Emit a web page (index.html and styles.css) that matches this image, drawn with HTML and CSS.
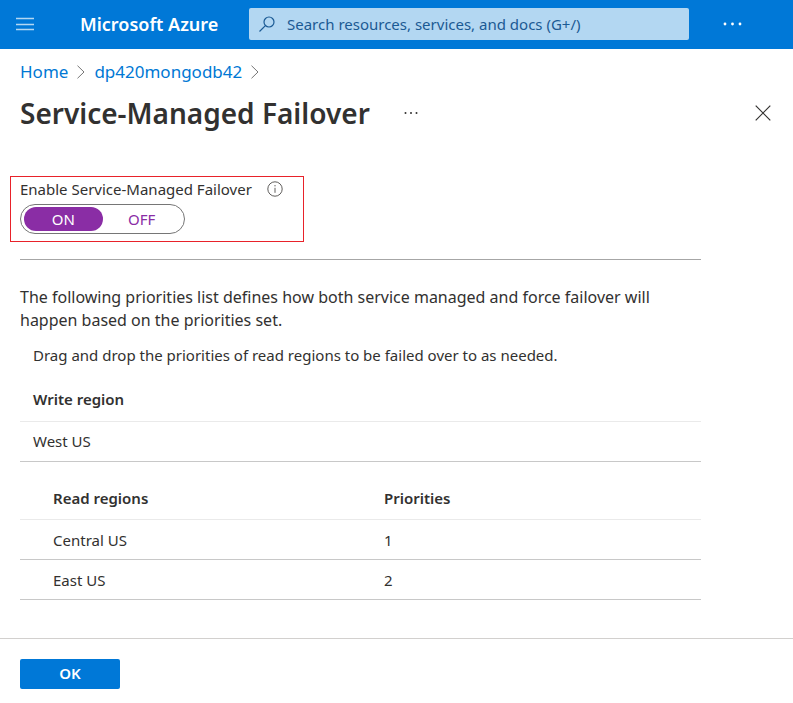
FILE: index.html
```html
<!DOCTYPE html>
<html lang="en">
<head>
<meta charset="utf-8">
<meta name="viewport" content="width=device-width, initial-scale=1">
<title>Service-Managed Failover - Microsoft Azure</title>
<link rel="stylesheet" href="styles.css">
</head>
<body>
<header class="topbar">
  <button class="icon-button menu-button" type="button" aria-label="Show portal menu">
    <svg width="18" height="14" viewBox="0 0 18 14" stroke="#b3d7f2" fill="none" stroke-width="1.300"><path d="M0 1.500h18M0 7.500h18M0 12.500h18"/></svg>
  </button>
  <a class="brand" href="#">Microsoft Azure</a>
  <label class="search">
    <svg width="16" height="16" viewBox="0 0 16 16" stroke="#1b5a94" fill="none" stroke-width="1.2"><circle cx="10" cy="6" r="5"/><path d="M6.4 9.6.5 15.5"/></svg>
    <input type="search" aria-label="Search" placeholder="Search resources, services, and docs (G+/)">
  </label>
  <button class="icon-button more-button" type="button" aria-label="More">
    <svg width="20" height="4" viewBox="0 0 20 4" fill="#fff"><circle cx="2" cy="2" r="1.4"/><circle cx="9.500" cy="2" r="1.4"/><circle cx="17" cy="2" r="1.4"/></svg>
  </button>
</header>

<nav class="breadcrumb" aria-label="Breadcrumb">
  <a href="#">Home</a>
  <svg width="8" height="14" viewBox="0 0 8 14" stroke="#767676" fill="none"><path d="M.5.7 7 7 .5 13.300"/></svg>
  <a href="#">dp420mongodb42</a>
  <svg width="8" height="14" viewBox="0 0 8 14" stroke="#767676" fill="none"><path d="M.5.7 7 7 .5 13.300"/></svg>
</nav>

<div class="title-row">
  <h1>Service-Managed Failover</h1>
  <button class="icon-button" type="button" aria-label="More actions">
    <svg width="14" height="4" viewBox="0 0 14 4" fill="#323130"><circle cx="1.500" cy="2" r="1"/><circle cx="7" cy="2" r="1"/><circle cx="12.500" cy="2" r="1"/></svg>
  </button>
  <button class="icon-button close-button" type="button" aria-label="Close">
    <svg width="16" height="16" viewBox="0 0 16 16" stroke="#323130" fill="none" stroke-width="1.200"><path d="m.7.7 14.600 14.600M15.300.7.7 15.300"/></svg>
  </button>
</div>

<main>
  <fieldset class="failover">
    <legend class="failover-label">
      Enable Service-Managed Failover
      <svg width="16" height="16" viewBox="0 0 16 16" fill="none" stroke="#605e5c"><circle cx="8" cy="8" r="7.200"/><path d="M8 6.800v5M8 4v1.400"/></svg>
    </legend>
    <div class="toggle">
      <label><input type="radio" name="failover" checked><span>ON</span></label>
      <label><input type="radio" name="failover"><span>OFF</span></label>
    </div>
  </fieldset>

  <div class="content">
    <p class="intro">The following priorities list defines how both service managed and force failover will happen based on the priorities set.</p>
    <p class="hint">Drag and drop the priorities of read regions to be failed over to as needed.</p>

    <table class="regions write">
      <thead><tr><th scope="col">Write region</th></tr></thead>
      <tbody><tr><td>West US</td></tr></tbody>
    </table>

    <table class="regions read">
      <thead><tr><th scope="col">Read regions</th><th scope="col">Priorities</th></tr></thead>
      <tbody>
        <tr><td>Central US</td><td>1</td></tr>
        <tr><td>East US</td><td>2</td></tr>
      </tbody>
    </table>
  </div>
</main>

<footer class="actions">
  <button class="ok-button" type="button">OK</button>
</footer>
</body>
</html>
```
FILE: styles.css
```css
* { box-sizing: border-box; }

body {
  margin: 0;
  background: #fff;
  color: #323130;
  font: 15px/20px "Segoe UI", "Noto Sans", "Open Sans", sans-serif;
}

button, input { font: inherit; }

a { color: #0078d4; text-decoration: none; }

svg { display: block; flex: none; }

.icon-button {
  display: flex;
  align-items: center;
  justify-content: center;
  padding: 0;
  border: 0;
  background: none;
  cursor: pointer;
}

.topbar {
  display: flex;
  align-items: center;
  height: 49px;
  padding-bottom: 1px;
  background: #0078d7;
}

.menu-button { width: 50px; height: 48px; }

.brand {
  width: 199px;
  padding-left: 30px;
  color: #fff;
  font-size: 18px;
  font-weight: 600;
  white-space: nowrap;
}

.search {
  display: flex;
  flex: 1;
  align-items: center;
  gap: 12px;
  height: 32px;
  padding: 0 10px;
  border-radius: 2px;
  background: #b3d7f2;
}

.search input {
  flex: 1;
  min-width: 0;
  padding: 0;
  border: 0;
  outline: 0;
  background: none;
  color: #1b5a94;
}

.search input::placeholder { color: #1b5a94; opacity: 1; }

.more-button { width: 88px; height: 48px; margin-right: 16px; }

.breadcrumb {
  display: flex;
  align-items: center;
  gap: 9px;
  padding: 11px 20px 0;
  font-size: 17px;
  line-height: 24px;
}

.title-row {
  display: flex;
  align-items: center;
  gap: 34px;
  padding: 9px 20px 0;
}

h1 {
  margin: 0;
  font-size: 28px;
  font-weight: 600;
  line-height: 40px;
}

.close-button { width: 20px; height: 20px; margin-left: auto; }

.failover {
  width: 294px;
  margin: 43px 10px 0;
  padding: 2px 9px 7px;
  border: 1px solid #e8222a;
}

.failover-label {
  display: flex;
  float: left;
  align-items: center;
  gap: 15px;
  width: 100%;
  padding: 0 0 5px;
  line-height: 20px;
  white-space: nowrap;
}

.toggle {
  display: flex;
  clear: both;
  width: 165px;
  height: 30px;
  padding: 2px 3px;
  border: 1px solid #767676;
  border-radius: 15px;
}

.toggle label { position: relative; flex: 1; cursor: pointer; }

.toggle input {
  position: absolute;
  inset: 0;
  margin: 0;
  opacity: 0;
}

.toggle span {
  display: block;
  border-radius: 12px;
  color: #8a2da5;
  line-height: 24px;
  text-align: center;
}

.toggle input:checked + span { background: #8a2da5; color: #fff; }

.content {
  margin: 17px 92px 38px 20px;
  border-top: 1px solid #a6a6a6;
}

.intro {
  margin: 26px 0 13px;
  font-size: 16px;
  line-height: 23px;
}

.hint { margin: 0 0 13px; padding-left: 13px; }

.regions {
  width: 100%;
  border-collapse: collapse;
  table-layout: fixed;
}

.regions th {
  height: 43px;
  padding: 0;
  border-bottom: 1px solid #eaeaea;
  font-weight: 600;
  text-align: left;
}

.regions td {
  height: 40px;
  padding: 0;
  border-bottom: 1px solid #c8c8c8;
}

.write th, .write td { padding-left: 13px; }

.read { margin-top: 15px; }

.read th:first-child, .read td:first-child { padding-left: 33px; }

.read th:first-child { width: 364px; }

.actions {
  padding: 20px;
  border-top: 1px solid #d2d0ce;
}

.ok-button {
  display: block;
  width: 100px;
  height: 30px;
  padding: 0 0 2px;
  border: 0;
  border-radius: 2px;
  background: #0078d7;
  color: #fff;
  font-weight: 600;
  cursor: pointer;
}
```
